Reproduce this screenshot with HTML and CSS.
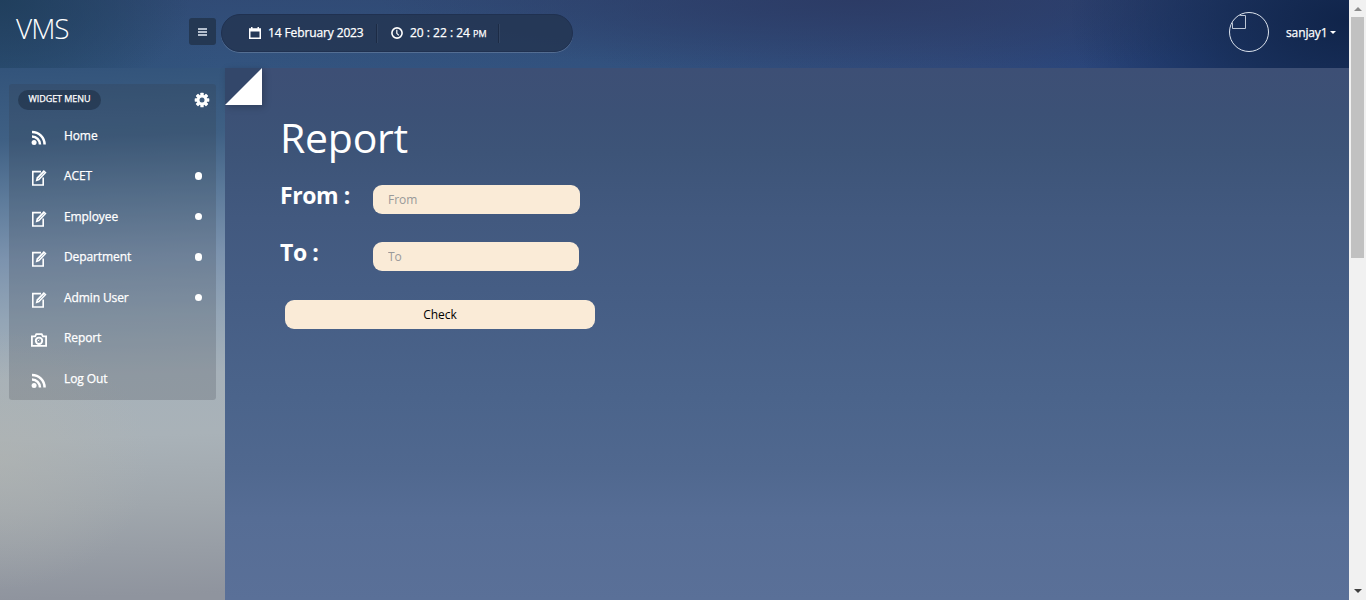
FILE: index.html
```html
<!DOCTYPE html>
<html lang="en">
<head>
<meta charset="utf-8">
<title>VMS</title>
<link rel="stylesheet" href="styles.css">
</head>
<body>
<svg class="defs" width="0" height="0">
  <symbol id="rss" viewBox="0 0 16 16"><circle cx="3.1" cy="12.4" r="2.5" fill="currentColor"/><path d="M1 6.6a8 8 0 0 1 8 8M1 2a12.6 12.6 0 0 1 12.6 12.6" fill="none" stroke="currentColor" stroke-width="2.5"/></symbol>
  <symbol id="edit" viewBox="0 0 16 16"><path d="M10 1.6H1.8v13.4h10.4V7.5" fill="none" stroke="currentColor" stroke-width="1.6"/><path d="M4.6 11.4l1-3.8L12.8 0l2.7 2.5L8.3 10.2z" fill="currentColor"/><path d="M7 9l6.3-6.5" stroke="#768fa8" stroke-width=".7"/></symbol>
  <symbol id="camera" viewBox="0 0 18 16"><path d="M1.9 4.4h3.2l1.2-2.3h5.4l1.2 2.3h3.2v9.4H1.9z" fill="none" stroke="currentColor" stroke-width="1.8"/><circle cx="9" cy="8.8" r="3.2" fill="none" stroke="currentColor" stroke-width="1.9"/><path d="M7.8 9.2l1.4-1.5" stroke="currentColor"/></symbol>
</svg>
<div class="window">
  <div class="app">
    <header class="header">
      <a class="logo">VMS</a>
      <button class="toggle"><i></i><i></i><i></i></button>
      <div class="status">
        <div class="cell date">
          <svg width="12" height="12" viewBox="0 0 12 12"><path d="M0 1.2h2V0h1.5v1.2h5V0H10v1.2h2V12H0zM1.5 4.5v6h9v-6z" fill="currentColor" fill-rule="evenodd"/></svg>
          <span>14 February 2023</span>
        </div>
        <div class="cell time">
          <svg width="12" height="12" viewBox="0 0 12 12"><circle cx="6" cy="6" r="5.1" fill="none" stroke="currentColor" stroke-width="1.6"/><path d="M5.8 2.8v3.5l2 2" fill="none" stroke="currentColor" stroke-width="1.2"/></svg>
          <span>20 : 22 : 24 <small>PM</small></span>
        </div>
      </div>
      <div class="user">
        <span class="avatar"><svg width="15" height="16" viewBox="0 0 15 16"><path d="M4 1.5h9.5v13H.5V5" fill="none" stroke="#bcc6d5"/></svg></span>
        <span class="name">sanjay1</span><i class="caret"></i>
      </div>
    </header>
    <div class="body">
      <aside class="sidebar">
        <nav class="menu">
          <div class="menu-head">
            <span class="pill">WIDGET MENU</span>
            <svg class="gear" width="16" height="16" viewBox="-8 -8 16 16"><g fill="currentColor"><rect x="-1.7" y="-7.3" width="3.4" height="14.6" rx=".6"/><rect x="-1.7" y="-7.3" width="3.4" height="14.6" rx=".6" transform="rotate(45)"/><rect x="-1.7" y="-7.3" width="3.4" height="14.6" rx=".6" transform="rotate(90)"/><rect x="-1.7" y="-7.3" width="3.4" height="14.6" rx=".6" transform="rotate(135)"/><circle r="5.2"/></g><circle r="2.5" fill="#3f5c7c"/></svg>
          </div>
          <a class="item"><svg class="ico"><use href="#rss"/></svg><span>Home</span></a>
          <a class="item sub"><svg class="ico"><use href="#edit"/></svg><span>ACET</span></a>
          <a class="item sub"><svg class="ico"><use href="#edit"/></svg><span>Employee</span></a>
          <a class="item sub"><svg class="ico"><use href="#edit"/></svg><span>Department</span></a>
          <a class="item sub"><svg class="ico"><use href="#edit"/></svg><span>Admin User</span></a>
          <a class="item"><svg class="ico wide"><use href="#camera"/></svg><span>Report</span></a>
          <a class="item"><svg class="ico"><use href="#rss"/></svg><span>Log Out</span></a>
        </nav>
      </aside>
      <main class="main">
        <div class="fold"></div>
        <form class="form">
          <h1>Report</h1>
          <div class="row"><label>From :</label><input class="field" placeholder="From"></div>
          <div class="row second"><label>To :</label><input class="field" placeholder="To"></div>
          <button type="button" class="check">Check</button>
        </form>
      </main>
    </div>
  </div>
  <div class="scroll"><i class="up"></i><div class="thumb"></div><i class="down"></i></div>
</div>
</body>
</html>
```
FILE: styles.css
```css
* { box-sizing: border-box; }
body { margin: 0; font-family: "Open Sans", sans-serif; font-size: 12px; color: #fff; overflow: hidden; }
.defs { display: block; position: absolute; }
.window { display: flex; width: 1366px; height: 600px; }
.app {
  flex: 1; display: flex; flex-direction: column;
  background:
    radial-gradient(ellipse 150px 130px at 0 460px, rgba(178,180,176,.55), transparent),
    linear-gradient(178deg, #2d4769 0, #33547b 70px, #3f6084 140px, #5d7b9b 200px, #7c93ae 260px, #93a5b6 320px, #a6b1b9 380px, #a9b2b8 440px, #a0a7ad 510px, #8f949e 600px);
}
.header {
  height: 68px; display: flex; align-items: flex-start;
  background:
    radial-gradient(ellipse 190px 110px at 0 0, rgba(31,62,91,.9), rgba(31,62,91,0)),
    radial-gradient(ellipse 280px 150px at 1349px 20px, #10244a 0, rgba(20,42,82,.75) 45%, rgba(32,58,107,0)),
    radial-gradient(ellipse 480px 75px at 860px 0, rgba(44,59,101,.95) 0, rgba(44,59,101,0)),
    linear-gradient(180deg, rgba(45,62,104,.4), rgba(45,62,104,0)),
    linear-gradient(90deg, #2d5076 0, #33547f 220px, #32527f 600px, #304a7b 950px, #26427a 1200px, #203a6b);
}
.logo { width: 189px; padding: 9px 0 0 16px; font-size: 28px; line-height: 38px; font-weight: 300; letter-spacing: -1px; }
.toggle { width: 27px; height: 27px; margin-top: 18px; padding: 0 9px; border: 0; border-radius: 3px; background: #243853; display: flex; flex-direction: column; justify-content: center; gap: 1px; }
.toggle i { height: 2px; background: #b4bfcd; }
.status { margin: 14px 0 0 5px; width: 352px; height: 38px; border-radius: 19px; background: rgba(35,52,81,.82); border: 1px solid #203150; box-shadow: 0 1px 0 rgba(255,255,255,.17); display: flex; align-items: center; padding-left: 27px; letter-spacing: -.12px; }
.status span, .name, .item span, .pill { -webkit-text-stroke: .25px #fff; }
.cell { height: 19px; display: flex; align-items: center; border-right: 1px solid #1c2b45; box-shadow: 1px 0 rgba(255,255,255,.06); white-space: nowrap; }
.cell span { margin-top: -1px; }
.date { width: 128px; gap: 7px; }
.time { width: 122px; padding-left: 14px; gap: 7px; letter-spacing: 0; }
.time small { font-size: 9px; letter-spacing: 0; }
.user { margin-left: auto; display: flex; align-items: center; padding: 12px 13px 0 0; letter-spacing: -.12px; }
.avatar { width: 40px; height: 40px; border: 1px solid #dce3ed; border-radius: 50%; overflow: hidden; padding: 1px 0 0 2px; }
.name { width: 41px; margin-left: 17px; white-space: nowrap; }
.avatar svg { display: block; }
.caret { border: 3px solid transparent; border-top-color: #fff; border-bottom: 0; margin-left: 3px; }
.body { flex: 1; display: flex; }
.sidebar { width: 225px; padding: 16px 9px; }
.menu { height: 316px; background: rgba(50,57,65,.2); border-radius: 3px; }
.menu-head { height: 31px; display: flex; justify-content: space-between; align-items: center; padding: 0 6px 0 9px; }
.pill { height: 20px; width: 83px; border-radius: 10px; background: rgba(30,46,69,.6); font-size: 9px; line-height: 18px; text-align: center; letter-spacing: -.05px; }
.item { height: 40.5px; display: flex; align-items: center; padding: 0 14px 0 22px; letter-spacing: -.1px; }
.ico { width: 16px; height: 16px; margin: 5px 17px 0 0; }
.ico.wide { width: 18px; margin: 5px 16px 0 -1px; }
.sub::after { content: ""; margin-left: auto; width: 7.5px; height: 7.5px; border-radius: 50%; background: #fff; }
.main { flex: 1; background: linear-gradient(#3d4f75 0, #3c5176 45px, #3d5478 85px, #42597f 150px, #455d84 220px, #4b648b 330px, #50688f 400px, #566d95 450px, #5a7098 532px); }
.fold { width: 37px; height: 37px; background: linear-gradient(135deg, #33476a 49.6%, #fff 50.4%); box-shadow: 2px 2px 7px rgba(0,0,0,.22); }
.form { padding: 4px 0 0 55px; }
h1 { margin: 0; font-size: 41px; line-height: 57px; font-weight: 400; letter-spacing: -.25px; }
.row { display: flex; margin-top: 19px; height: 29px; }
.row.second { margin-top: 28px; }
label { width: 93px; font-size: 23px; line-height: 21px; font-weight: 700; letter-spacing: -.4px; }
.field, .check { font: 12px/29px "Open Sans", sans-serif; height: 29px; border: 0; border-radius: 9px; background: #faebd7; }
.field { width: 207px; padding: 0 15px; }
.second .field { width: 206px; }
.field::placeholder { color: #999; opacity: 1; }
.check { display: block; margin: 29px 0 0 5px; width: 310px; padding: 0; color: #000; }
.scroll { width: 17px; background: #f1f1f1; display: flex; flex-direction: column; align-items: center; }
.thumb { width: 13px; height: 241px; background: #c1c1c1; margin-top: 6px; }
.up { margin-top: 7px; border: 4px solid transparent; border-top: 0; border-bottom-color: #8b8b8b; }
.down { margin: auto 0 7px; border: 4px solid transparent; border-bottom: 0; border-top-color: #404040; }
```
